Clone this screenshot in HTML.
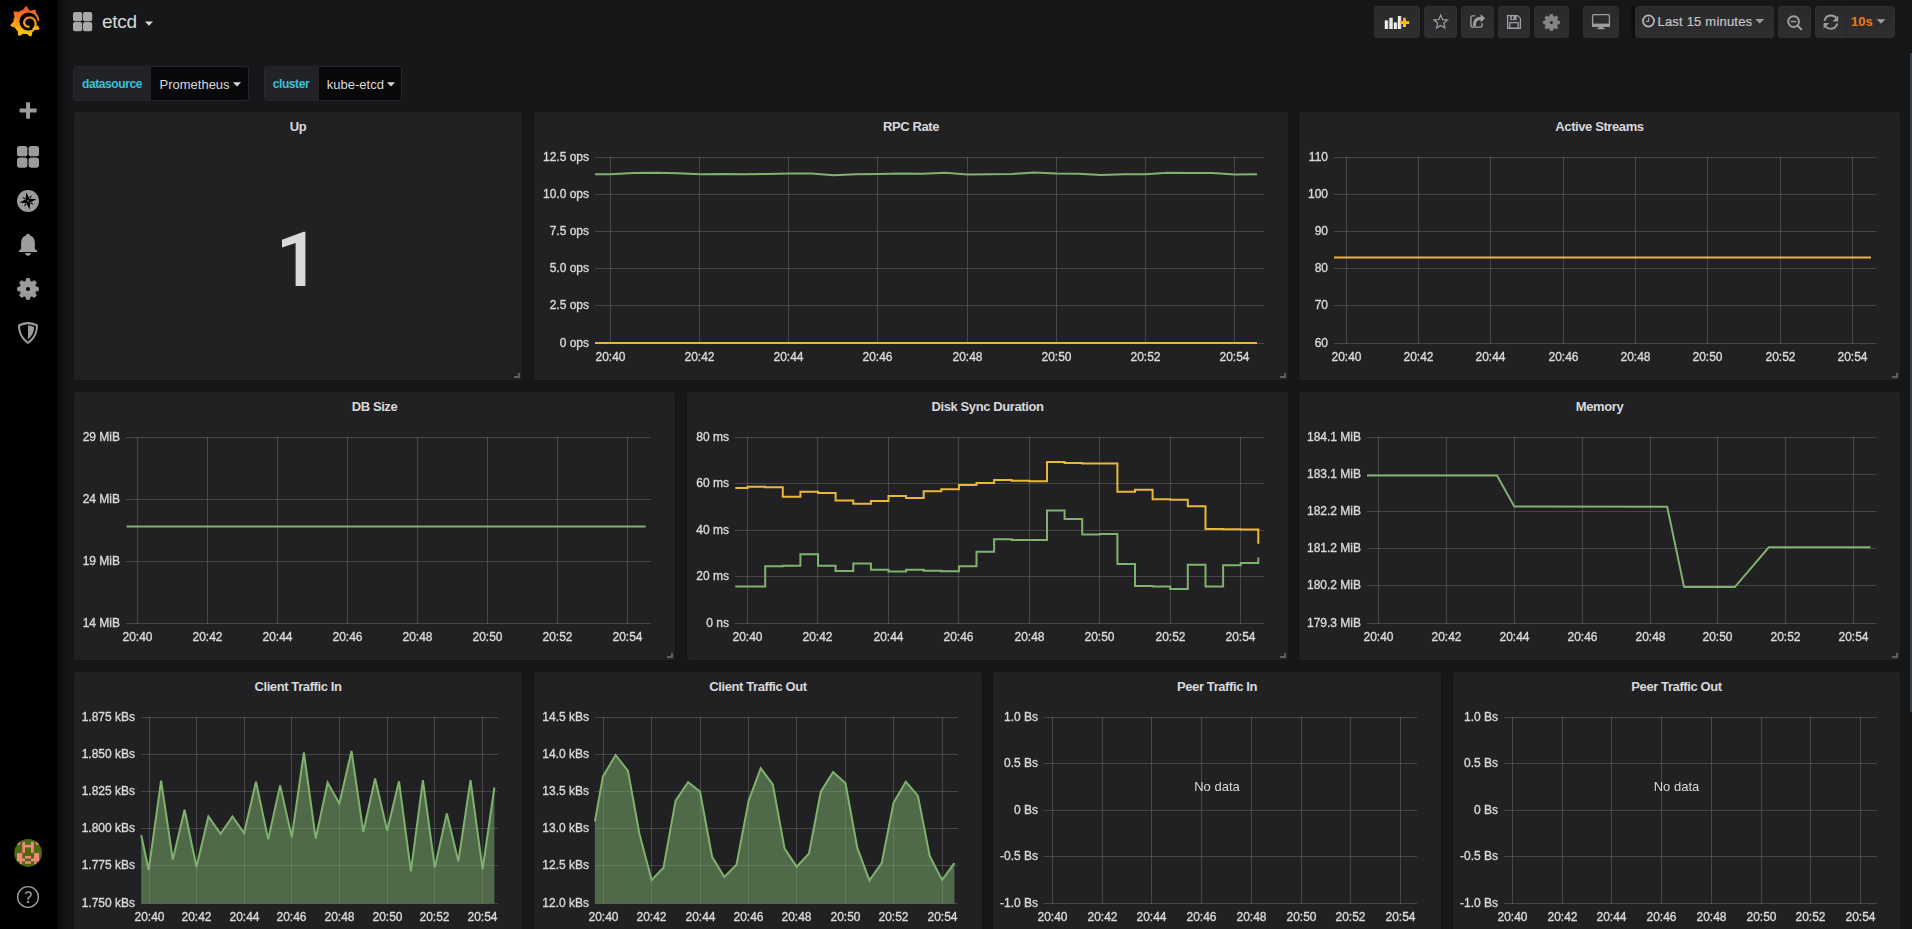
<!DOCTYPE html>
<html><head><meta charset="utf-8"><title>etcd - Grafana</title>
<style>
html,body{margin:0;padding:0;}
body{width:1912px;height:929px;overflow:hidden;background:#161719;position:relative;font-family:"Liberation Sans",sans-serif;color:#d8d9da;}
.side{position:absolute;left:0;top:0;width:57px;height:929px;background:#000;}
.sshadow{position:absolute;left:57px;top:0;width:17px;height:929px;background:linear-gradient(to right,#0b0b0c,#111214 40%,#161719);}
.panel{position:absolute;box-sizing:border-box;background:#212124;border:1px solid #141414;border-radius:3px;}
.ptitle{position:absolute;left:0;right:0;top:7px;text-align:center;font-size:13px;font-weight:bold;letter-spacing:-0.4px;color:#d8d9da;line-height:16px;}
.rh{position:absolute;right:2px;bottom:2px;width:6px;height:5px;border-right:2px solid #5f5f61;border-bottom:2px solid #5f5f61;box-sizing:border-box;}
.btn{position:absolute;top:6px;height:32px;box-sizing:border-box;border-radius:3px;background:linear-gradient(#2a2a2c,#2e2e31);border:1px solid #2f2f32;}
.tv{position:absolute;top:66px;height:35px;box-sizing:border-box;border:1px solid #26272b;border-radius:3px;background:#09090b;font-size:13px;}
.tvl{position:absolute;left:0;top:0;bottom:0;background:#212327;color:#38c2d6;font-weight:bold;}
.tvv{position:absolute;top:0;bottom:0;color:#d8d9da;}
svg text{font-family:"Liberation Sans",sans-serif;font-size:12px;fill:#d8d9da;}
.lbl text{stroke:#d8d9da;stroke-width:0.35px;}
.ov{will-change:transform;}
</style></head><body>
<div class="side"></div>
<div class="sshadow"></div>
<svg width="57" height="45" style="position:absolute;left:0;top:0"><defs><linearGradient id="lg" x1="0" y1="0" x2="0" y2="1"><stop offset="0" stop-color="#ee4a2b"/><stop offset="0.5" stop-color="#f7921e"/><stop offset="1" stop-color="#fdd00a"/></linearGradient><linearGradient id="lg2" gradientUnits="userSpaceOnUse" x1="0" y1="6" x2="0" y2="37"><stop offset="0" stop-color="#ee4a2b"/><stop offset="0.5" stop-color="#f7921e"/><stop offset="1" stop-color="#fdd00a"/></linearGradient></defs><path d="M13.40 21.80 L13.41 21.37 L13.43 20.95 L13.47 20.52 L13.52 20.10 L13.59 19.68 L13.67 19.26 L13.76 18.85 L13.87 18.44 L14.00 18.03 L14.14 17.63 L14.29 17.23 L14.45 16.84 L14.63 16.45 L14.37 15.83 L14.14 15.19 L13.95 14.52 L13.78 13.83 L13.65 13.12 L13.55 12.39 L13.50 11.64 L14.24 11.57 L14.97 11.54 L15.70 11.54 L16.40 11.59 L17.10 11.67 L17.77 11.78 L18.43 11.93 L18.78 11.69 L19.13 11.45 L19.50 11.23 L19.87 11.03 L20.25 10.83 L20.64 10.65 L21.03 10.49 L21.43 10.34 L21.83 10.20 L22.24 10.07 L22.65 9.96 L23.06 9.87 L23.39 9.28 L23.76 8.70 L24.16 8.13 L24.61 7.58 L25.08 7.04 L25.60 6.51 L26.15 6.01 L26.67 6.55 L27.14 7.11 L27.58 7.68 L27.99 8.27 L28.35 8.86 L28.68 9.46 L28.96 10.07 L29.37 10.20 L29.77 10.34 L30.17 10.49 L30.56 10.65 L30.95 10.83 L31.57 10.57 L32.21 10.34 L32.88 10.15 L33.57 9.98 L34.28 9.85 L35.01 9.75 L35.76 9.70 L35.83 10.44 L35.86 11.17 L35.86 11.90 L35.81 12.60 L36.09 12.99 L36.40 13.37 L36.68 13.75 L36.96 14.14 L37.22 14.54 L37.46 14.95 L37.70 15.37 L37.91 15.79 L38.12 16.23 L38.30 16.67 L38.47 17.11 L38.63 17.57 L38.77 18.02 L38.89 18.49 L39.00 18.95 L39.09 19.42 L39.17 19.89 L39.52 20.34 L39.27 20.84 L37.79 21.37 L37.80 21.80 L37.79 22.23 L37.77 22.65 L37.73 23.08 L37.68 23.50 L37.61 23.92 L37.53 24.34 L37.44 24.75 L37.82 25.30 L38.18 25.89 L38.51 26.50 L38.82 27.14 L39.09 27.81 L39.34 28.50 L39.55 29.22 L38.84 29.44 L38.13 29.63 L37.42 29.77 L36.72 29.88 L36.02 29.94 L35.34 29.97 L34.67 29.96 L34.38 30.27 L34.07 30.58 L33.76 30.87 L33.44 31.15 L33.11 31.41 L32.77 31.67 L32.42 31.91 L32.34 32.58 L32.21 33.26 L32.05 33.93 L31.85 34.61 L31.61 35.29 L31.33 35.97 L31.00 36.65 L30.32 36.34 L29.67 36.00 L29.05 35.63 L28.46 35.24 L27.90 34.83 L27.37 34.39 L26.88 33.93 L26.45 33.97 L26.03 33.99 L25.60 34.00 L25.17 33.99 L24.75 33.97 L24.32 33.93 L23.90 33.88 L23.48 33.81 L23.06 33.73 L22.52 34.14 L21.95 34.52 L21.35 34.87 L20.72 35.20 L20.07 35.50 L19.38 35.76 L18.67 36.00 L18.42 35.30 L18.21 34.59 L18.04 33.89 L17.92 33.19 L17.82 32.50 L17.77 31.82 L17.76 31.15 L17.44 30.87 L17.13 30.58 L16.82 30.27 L16.53 29.96 L16.25 29.64 L15.99 29.31 L15.73 28.97 L15.49 28.62 L15.25 28.27 L15.03 27.90 L14.83 27.53 L14.17 27.37 L13.52 27.18 L12.86 26.95 L12.20 26.68 L11.55 26.36 L10.91 26.01 L10.27 25.62 L10.65 24.98 L11.05 24.37 L11.48 23.78 L11.93 23.24 L12.40 22.72 L12.89 22.24 Z" fill="url(#lg)"/><circle cx="28.5" cy="21.5" r="9.1" fill="#000"/><path d="M35 20.9 L41.5 20.5 L41.5 25.7 L35 25.5 Z" fill="#000"/><path d="M29.52 26.50 L29.02 26.64 L28.48 26.70 L27.91 26.68 L27.34 26.57 L26.76 26.37 L26.21 26.08 L25.68 25.70 L25.20 25.23 L24.79 24.68 L24.45 24.05 L24.19 23.36 L24.10 22.63 L24.19 21.89 L24.38 21.17 L24.67 20.48 L25.05 19.84 L25.52 19.25 L26.07 18.73 L26.68 18.29 L27.36 17.95 L28.08 17.69 L28.83 17.54 L29.59 17.49 L30.37 17.52 L31.14 17.66 L31.89 17.90 L32.60 18.25 L33.27 18.70 L33.87 19.25 L34.39 19.88 L34.83 20.58 L35.16 21.35 L35.39 22.16 L35.50 23.00 L35.60 23.87 L35.57 24.77 L35.41 25.68 L35.12 26.57 L34.69 27.44 L34.12 28.25 L33.44 28.99 L32.64 29.63" fill="none" stroke="url(#lg2)" stroke-width="2.2" stroke-linejoin="round"/></svg><svg width="57" height="929" style="position:absolute;left:0;top:0"><rect x="26.1" y="102.3" width="3.9" height="16.4" rx="0.6" fill="#9b9b9c"/><rect x="19.6" y="108.6" width="17" height="3.9" rx="0.6" fill="#9b9b9c"/><rect x="17" y="146" width="10.4" height="10.3" rx="2.6" fill="#9b9b9c"/><rect x="28.6" y="146" width="10.4" height="10.3" rx="2.6" fill="#9b9b9c"/><rect x="17" y="157.4" width="10.4" height="10.3" rx="2.6" fill="#9b9b9c"/><rect x="28.6" y="157.4" width="10.4" height="10.3" rx="2.6" fill="#9b9b9c"/><circle cx="28" cy="201" r="11" fill="#9b9b9c"/><path d="M26.31 192.51 L29.52 198.63 L36.39 199.31 L30.27 202.52 L29.59 209.39 L26.38 203.27 L19.51 202.59 L25.63 199.38 Z M30.82 198.30 L29.33 197.30 L31.81 195.23 Z M30.60 203.82 L31.60 202.33 L33.67 204.81 Z M25.08 203.60 L26.57 204.60 L24.09 206.67 Z M25.30 198.08 L24.30 199.57 L22.23 197.09 Z " fill="#000"/><rect x="27.3" y="200.3" width="1.3" height="1.3" fill="#9b9b9c"/><path d="M28 233.8 C28.9 233.8 29.7 234.6 30.2 235.6 C33 236.6 34.8 239 34.9 242.5 L34.9 248.6 C34.9 249.2 35.6 249.9 36.4 250 C37 250.1 37.2 250.6 37.2 251.2 C37.2 251.9 36.8 252.1 36.2 252.1 L19.8 252.1 C19.2 252.1 18.8 251.9 18.8 251.2 C18.8 250.6 19 250.1 19.6 250 C20.4 249.9 21.1 249.2 21.1 248.6 L21.1 242.5 C21.2 239 23 236.6 25.8 235.6 C26.3 234.6 27.1 233.8 28 233.8 Z" fill="#9b9b9c"/><path d="M25 252.9 L31 252.9 C30.6 254.8 29.5 255.8 28 255.8 C26.5 255.8 25.4 254.8 25 252.9 Z" fill="#9b9b9c"/><path d="M25.86 281.29 L26.38 278.52 L29.62 278.52 L30.14 281.29 L31.94 282.04 L34.26 280.45 L36.55 282.74 L34.96 285.06 L35.71 286.86 L38.48 287.38 L38.48 290.62 L35.71 291.14 L34.96 292.94 L36.55 295.26 L34.26 297.55 L31.94 295.96 L30.14 296.71 L29.62 299.48 L26.38 299.48 L25.86 296.71 L24.06 295.96 L21.74 297.55 L19.45 295.26 L21.04 292.94 L20.29 291.14 L17.52 290.62 L17.52 287.38 L20.29 286.86 L21.04 285.06 L19.45 282.74 L21.74 280.45 L24.06 282.04 Z" fill="#9b9b9c" stroke="#9b9b9c" stroke-width="0.8" stroke-linejoin="round"/><circle cx="28.0" cy="289.0" r="2.0" fill="#000"/><path d="M28 322 C31.5 322 35.2 323.4 38 324.8 C38 333 35 339.5 28 344 C21 339.5 18 333 18 324.8 C20.8 323.4 24.5 322 28 322 Z" fill="#9b9b9c"/><path d="M28 324.3 C31 324.3 33.9 325.3 35.9 326.3 C35.8 332.6 33.4 337.7 28 341.4 C22.6 337.7 20.2 332.6 20.1 326.3 C22.1 325.3 25 324.3 28 324.3 Z" fill="#000"/><path d="M28 325.6 C30.5 325.6 32.5 326.3 34.2 327.1 C34 332.2 32 336.4 28 339.4 Z" fill="#9b9b9c"/><defs><clipPath id="avc"><circle cx="28.1" cy="853" r="13.9"/></clipPath></defs><g clip-path="url(#avc)"><rect x="14" y="839" width="28.2" height="28.2" fill="#4d6a12"/><g fill="#f2877c"><rect x="16.8" y="841.5" width="3.1" height="3.3"/><rect x="36" y="841.5" width="3.1" height="3.3"/><rect x="22.3" y="841.9" width="2.7" height="10.9"/><rect x="31" y="841.9" width="2.8" height="10.9"/><rect x="25" y="844.8" width="6" height="2.6"/><rect x="17" y="853" width="5.3" height="8.3"/><rect x="22.3" y="858.5" width="2.7" height="2.8"/><rect x="19.7" y="861.3" width="2.6" height="2.5"/><rect x="34" y="853" width="5.1" height="8.3"/><rect x="31" y="858.5" width="3" height="2.8"/><rect x="34" y="861.3" width="2.4" height="2.5"/><rect x="25" y="856" width="6" height="2.5"/><rect x="25" y="861.3" width="6" height="2.5"/></g></g><circle cx="28" cy="897" r="10.4" fill="none" stroke="#9b9b9c" stroke-width="1.4"/><path d="M25.3 893.9 C25.8 892.4 26.8 891.8 28.1 891.8 C29.9 891.8 31.1 893 31.1 894.5 C31.1 896.1 29.9 896.8 28.9 897.5 C28.3 897.9 28.1 898.4 28.1 899.3 L28.1 899.8" fill="none" stroke="#9b9b9c" stroke-width="1.6"/><rect x="27.0" y="900.9" width="2.1" height="2.0" fill="#9b9b9c"/></svg><svg width="20" height="20" style="position:absolute;left:73px;top:12px"><rect x="0" y="0" width="9.2" height="9.2" rx="2" fill="#a9a9aa"/><rect x="10" y="0" width="9.2" height="9.2" rx="2" fill="#a9a9aa"/><rect x="0" y="10" width="9.2" height="9.2" rx="2" fill="#a9a9aa"/><rect x="10" y="10" width="9.2" height="9.2" rx="2" fill="#a9a9aa"/></svg><div style="position:absolute;left:102px;top:10px;font-size:19px;letter-spacing:-0.25px;line-height:24px;color:#d8d9da">etcd</div><svg width="10" height="6" style="position:absolute;left:145px;top:21px"><path d="M0 0.5 L8 0.5 L4 4.8 Z" fill="#d8d9da"/></svg><div class="btn" style="left:1374px;width:46px"></div><div class="btn" style="left:1424px;width:33px"></div><div class="btn" style="left:1461px;width:33px"></div><div class="btn" style="left:1498px;width:32px"></div><div class="btn" style="left:1534px;width:35px"></div><div class="btn" style="left:1583px;width:36px"></div><div class="btn" style="left:1635px;width:139px"></div><div class="btn" style="left:1778px;width:33px"></div><div class="btn" style="left:1815px;width:80px"></div><div style="position:absolute;left:1631px;top:6px;width:4px;height:32px;background:linear-gradient(to right,rgba(10,10,11,0.3),#0a0a0b)"></div><div style="position:absolute;left:1846px;top:7px;width:1px;height:30px;background:#262629"></div><svg width="1912" height="45" style="position:absolute;left:0;top:0"><defs><linearGradient id="bar" x1="0" y1="0" x2="1" y2="0"><stop offset="0" stop-color="#fff"/><stop offset="0.5" stop-color="#e8e8e8"/><stop offset="1" stop-color="#cfcfcf"/></linearGradient><linearGradient id="plus" x1="0" y1="0" x2="0" y2="1"><stop offset="0" stop-color="#f7a223"/><stop offset="1" stop-color="#ffcf0c"/></linearGradient></defs><rect x="1384.8" y="20.4" width="3.4" height="8.6" fill="url(#bar)"/><rect x="1389.4" y="17.8" width="3.4" height="11.2" fill="url(#bar)"/><rect x="1393.8" y="22.4" width="3.4" height="6.6" fill="url(#bar)"/><rect x="1397.9" y="16" width="3.4" height="13.0" fill="url(#bar)"/><rect x="1399.9" y="21" width="9.2" height="3" fill="url(#plus)"/><rect x="1403" y="17.8" width="3" height="9.2" fill="url(#plus)"/><path d="M1440.70 15.10 L1442.58 19.61 L1447.45 20.01 L1443.74 23.19 L1444.87 27.94 L1440.70 25.40 L1436.53 27.94 L1437.66 23.19 L1433.95 20.01 L1438.82 19.61 Z" fill="none" stroke="#9d9ea0" stroke-width="1.2" stroke-linejoin="miter"/><path d="M1475.3 15.9 L1472.4 15.9 Q1470.9 15.9 1470.9 17.4 L1470.9 25.6 Q1470.9 27.1 1472.4 27.1 L1480.5 27.1 Q1482 27.1 1482 25.6 L1482 23.2" fill="none" stroke="#9d9ea0" stroke-width="1.4"/><path d="M1474.3 26.3 C1474.3 21 1475.6 18.4 1481 18.4" fill="none" stroke="#9d9ea0" stroke-width="3.1"/><path d="M1480.6 13.9 L1485.1 18.3 L1480.6 22.6 Z" fill="#9d9ea0"/><path d="M1507.6 15.6 L1517.6 15.6 L1520.4 18.4 L1520.4 28.4 L1507.6 28.4 Z" fill="none" stroke="#9d9ea0" stroke-width="1.3"/><rect x="1510.2" y="15.6" width="6.4" height="4.6" fill="#9d9ea0"/><rect x="1511.8" y="16.3" width="1.6" height="3" fill="#2c2c2f"/><rect x="1509.8" y="22.6" width="8.4" height="5.6" fill="none" stroke="#9d9ea0" stroke-width="1.3"/><path d="M1549.74 16.53 L1550.15 14.40 L1552.65 14.40 L1553.06 16.53 L1554.45 17.10 L1556.24 15.88 L1558.02 17.66 L1556.80 19.45 L1557.37 20.84 L1559.50 21.25 L1559.50 23.75 L1557.37 24.16 L1556.80 25.55 L1558.02 27.34 L1556.24 29.12 L1554.45 27.90 L1553.06 28.47 L1552.65 30.60 L1550.15 30.60 L1549.74 28.47 L1548.35 27.90 L1546.56 29.12 L1544.78 27.34 L1546.00 25.55 L1545.43 24.16 L1543.30 23.75 L1543.30 21.25 L1545.43 20.84 L1546.00 19.45 L1544.78 17.66 L1546.56 15.88 L1548.35 17.10 Z" fill="#858587" stroke="#858587" stroke-width="0.8" stroke-linejoin="round"/><circle cx="1551.4" cy="22.5" r="1.6" fill="#2c2c2f"/><rect x="1592.6" y="14.6" width="16.8" height="11.6" rx="1.2" fill="none" stroke="#9d9ea0" stroke-width="1.3"/><rect x="1592" y="23.6" width="18" height="3.2" fill="#9d9ea0"/><rect x="1599" y="26.6" width="4" height="1.6" fill="#9d9ea0"/><rect x="1597.4" y="27.8" width="7.2" height="1.4" fill="#9d9ea0"/><circle cx="1648.5" cy="21" r="5.6" fill="none" stroke="#b4b5b7" stroke-width="1.7"/><path d="M1648.6 17.6 L1648.6 21.4 L1645.8 21.4" fill="none" stroke="#9d9ea0" stroke-width="1.2"/><path d="M1755.2 19 L1764.2 19 L1759.7 23.6 Z" fill="#9d9ea0"/><circle cx="1793.6" cy="21.6" r="5.4" fill="none" stroke="#9d9ea0" stroke-width="1.9"/><path d="M1797.4 25.6 L1801.2 29.2" stroke="#9d9ea0" stroke-width="2.1" stroke-linecap="round"/><rect x="1790.8" y="20.8" width="5.6" height="1.5" fill="#9d9ea0"/><path d="M1824.6 20.8 C1825.4 17.4 1828 15.6 1831 15.6 C1833.4 15.6 1835 16.6 1836.2 17.8" fill="none" stroke="#9d9ea0" stroke-width="2"/><path d="M1838.2 15.6 L1838.2 21.4 L1832.6 21.4 Z" fill="#9d9ea0"/><path d="M1837.2 23.6 C1836.4 27 1833.8 28.8 1830.8 28.8 C1828.4 28.8 1826.8 27.8 1825.6 26.6" fill="none" stroke="#9d9ea0" stroke-width="2"/><path d="M1823.6 28.8 L1823.6 23 L1829.2 23 Z" fill="#9d9ea0"/><path d="M1876.6 19.2 L1885.5 19.2 L1881 23.8 Z" fill="#9d9ea0"/></svg><div style="position:absolute;left:1657.5px;top:14px;font-size:13px;line-height:16px;letter-spacing:0.2px;color:#c4c5c7;-webkit-text-stroke:0.2px #c4c5c7">Last 15 minutes</div><div style="position:absolute;left:1851px;top:14px;font-size:13px;line-height:16px;font-weight:bold;color:#eb7b18">10s</div><div class="tv" style="left:73px;width:176px"><div class="tvl" style="width:77px"></div></div><div class="tv" style="left:264px;width:138px"><div class="tvl" style="width:54px"></div></div><div style="position:absolute;left:82px;top:76px;font-size:12px;line-height:16px;font-weight:bold;letter-spacing:-0.4px;color:#38c2d6">datasource</div><div style="position:absolute;left:159.5px;top:77px;font-size:13px;line-height:16px;color:#d8d9da">Prometheus</div><svg width="10" height="6" style="position:absolute;left:233px;top:82px"><path d="M0 0.3 L8 0.3 L4 4.5 Z" fill="#d8d9da"/></svg><div style="position:absolute;left:272.7px;top:76px;font-size:12px;line-height:16px;font-weight:bold;letter-spacing:-0.4px;color:#38c2d6">cluster</div><div style="position:absolute;left:326.8px;top:77px;font-size:13px;line-height:16px;color:#d8d9da">kube-etcd</div><svg width="10" height="6" style="position:absolute;left:386.8px;top:82px"><path d="M0 0.3 L8 0.3 L4 4.5 Z" fill="#d8d9da"/></svg>
<div class="panel" style="left:73px;top:111px;width:450px;height:270px"><div class="ptitle">Up</div><div class="rh"></div></div><div class="panel" style="left:533px;top:111px;width:756px;height:270px"><div class="ptitle">RPC Rate</div><div class="rh"></div></div><div class="panel" style="left:1298px;top:111px;width:603px;height:270px"><div class="ptitle">Active Streams</div><div class="rh"></div></div><div class="panel" style="left:73px;top:391px;width:603px;height:270px"><div class="ptitle">DB Size</div><div class="rh"></div></div><div class="panel" style="left:686px;top:391px;width:603px;height:270px"><div class="ptitle">Disk Sync Duration</div><div class="rh"></div></div><div class="panel" style="left:1298px;top:391px;width:603px;height:270px"><div class="ptitle">Memory</div><div class="rh"></div></div><div class="panel" style="left:73px;top:671px;width:450px;height:272px"><div class="ptitle">Client Traffic In</div></div><div class="panel" style="left:533px;top:671px;width:450px;height:272px"><div class="ptitle">Client Traffic Out</div></div><div class="panel" style="left:992px;top:671px;width:450px;height:272px"><div class="ptitle">Peer Traffic In</div></div><div class="panel" style="left:1452px;top:671px;width:449px;height:272px"><div class="ptitle">Peer Traffic Out</div></div>
<svg class="ov" width="1912" height="929" style="position:absolute;left:0;top:0">
<g stroke="rgba(200,200,200,0.22)" stroke-width="1" fill="none"><path d="M595 157.5 H1264"/><path d="M595 194.5 H1264"/><path d="M595 231.5 H1264"/><path d="M595 268.5 H1264"/><path d="M595 305.5 H1264"/><path d="M595 343.5 H1264"/><path d="M610.5 157 V344"/><path d="M699.5 157 V344"/><path d="M788.5 157 V344"/><path d="M877.5 157 V344"/><path d="M967.5 157 V344"/><path d="M1056.5 157 V344"/><path d="M1145.5 157 V344"/><path d="M1234.5 157 V344"/><path d="M1334 157.5 H1876"/><path d="M1334 194.5 H1876"/><path d="M1334 231.5 H1876"/><path d="M1334 268.5 H1876"/><path d="M1334 305.5 H1876"/><path d="M1334 343.5 H1876"/><path d="M1346.5 157 V344"/><path d="M1418.5 157 V344"/><path d="M1490.5 157 V344"/><path d="M1563.5 157 V344"/><path d="M1635.5 157 V344"/><path d="M1707.5 157 V344"/><path d="M1780.5 157 V344"/><path d="M1852.5 157 V344"/><path d="M126 437.5 H651"/><path d="M126 499.5 H651"/><path d="M126 561.5 H651"/><path d="M126 623.5 H651"/><path d="M137.5 437 V624"/><path d="M207.5 437 V624"/><path d="M277.5 437 V624"/><path d="M347.5 437 V624"/><path d="M417.5 437 V624"/><path d="M487.5 437 V624"/><path d="M557.5 437 V624"/><path d="M627.5 437 V624"/><path d="M735 437.5 H1264"/><path d="M735 483.5 H1264"/><path d="M735 530.5 H1264"/><path d="M735 576.5 H1264"/><path d="M735 623.5 H1264"/><path d="M747.5 437 V624"/><path d="M817.5 437 V624"/><path d="M888.5 437 V624"/><path d="M958.5 437 V624"/><path d="M1029.5 437 V624"/><path d="M1099.5 437 V624"/><path d="M1170.5 437 V624"/><path d="M1240.5 437 V624"/><path d="M1367 437.5 H1876"/><path d="M1367 474.5 H1876"/><path d="M1367 511.5 H1876"/><path d="M1367 548.5 H1876"/><path d="M1367 585.5 H1876"/><path d="M1367 623.5 H1876"/><path d="M1378.5 437 V624"/><path d="M1446.5 437 V624"/><path d="M1514.5 437 V624"/><path d="M1582.5 437 V624"/><path d="M1650.5 437 V624"/><path d="M1717.5 437 V624"/><path d="M1785.5 437 V624"/><path d="M1853.5 437 V624"/><path d="M141 717.5 H498"/><path d="M141 754.5 H498"/><path d="M141 791.5 H498"/><path d="M141 828.5 H498"/><path d="M141 865.5 H498"/><path d="M141 903.5 H498"/><path d="M149.5 717 V904"/><path d="M196.5 717 V904"/><path d="M244.5 717 V904"/><path d="M291.5 717 V904"/><path d="M339.5 717 V904"/><path d="M387.5 717 V904"/><path d="M434.5 717 V904"/><path d="M482.5 717 V904"/><path d="M595 717.5 H958"/><path d="M595 754.5 H958"/><path d="M595 791.5 H958"/><path d="M595 828.5 H958"/><path d="M595 865.5 H958"/><path d="M595 903.5 H958"/><path d="M603.5 717 V904"/><path d="M651.5 717 V904"/><path d="M700.5 717 V904"/><path d="M748.5 717 V904"/><path d="M796.5 717 V904"/><path d="M845.5 717 V904"/><path d="M893.5 717 V904"/><path d="M942.5 717 V904"/><path d="M1044 717.5 H1417"/><path d="M1044 763.5 H1417"/><path d="M1044 810.5 H1417"/><path d="M1044 856.5 H1417"/><path d="M1044 903.5 H1417"/><path d="M1052.5 717 V904"/><path d="M1102.5 717 V904"/><path d="M1151.5 717 V904"/><path d="M1201.5 717 V904"/><path d="M1251.5 717 V904"/><path d="M1301.5 717 V904"/><path d="M1350.5 717 V904"/><path d="M1400.5 717 V904"/><path d="M1504 717.5 H1877"/><path d="M1504 763.5 H1877"/><path d="M1504 810.5 H1877"/><path d="M1504 856.5 H1877"/><path d="M1504 903.5 H1877"/><path d="M1512.5 717 V904"/><path d="M1562.5 717 V904"/><path d="M1611.5 717 V904"/><path d="M1661.5 717 V904"/><path d="M1711.5 717 V904"/><path d="M1761.5 717 V904"/><path d="M1810.5 717 V904"/><path d="M1860.5 717 V904"/></g>
<g><path d="M595 174.2 L610.9 174.2 L633.2 173.1 L655.5 172.8 L677.7 173.2 L700 174.2 L722.3 173.9 L744.6 174.2 L766.9 173.9 L789.1 173.5 L811.4 173.6 L833.7 175.2 L856 174.3 L878.3 174 L900.5 173.5 L922.8 173.8 L945.1 172.8 L967.4 174.6 L989.7 174.2 L1011.9 174 L1034.2 172.4 L1056.5 173.5 L1078.8 173.8 L1101.1 174.9 L1123.3 174.2 L1145.6 174.2 L1167.9 172.8 L1190.2 172.9 L1212.5 172.9 L1234.7 174.6 L1257 174.2" fill="none" stroke="#7eb26d" stroke-width="2" stroke-linejoin="miter"/><path d="M595 343 L1257 343" fill="none" stroke="#eab839" stroke-width="2" stroke-linejoin="miter"/><path d="M1334 257.5 L1871 257.5" fill="none" stroke="#eab839" stroke-width="2" stroke-linejoin="miter"/><path d="M126.5 526.5 L645.7 526.5" fill="none" stroke="#7eb26d" stroke-width="2" stroke-linejoin="miter"/><path d="M735.3 586.6 L747.6 586.6 L747.6 586.6 L765.2 586.6 L765.2 566.3 L782.8 566.3 L782.8 565.8 L800.4 565.8 L800.4 554.2 L818 554.2 L818 565.8 L835.6 565.8 L835.6 571 L853.3 571 L853.3 563.6 L870.9 563.6 L870.9 569.8 L888.5 569.8 L888.5 571.5 L906.1 571.5 L906.1 569.8 L923.7 569.8 L923.7 570.7 L941.3 570.7 L941.3 571.2 L958.9 571.2 L958.9 566.3 L976.5 566.3 L976.5 551.7 L994.1 551.7 L994.1 539.3 L1011.8 539.3 L1011.8 540 L1029.4 540 L1029.4 540 L1047 540 L1047 510.4 L1064.6 510.4 L1064.6 519 L1082.2 519 L1082.2 534.4 L1099.8 534.4 L1099.8 533.9 L1117.4 533.9 L1117.4 564.1 L1135 564.1 L1135 586.1 L1152.6 586.1 L1152.6 586.6 L1170.2 586.6 L1170.2 588.9 L1187.8 588.9 L1187.8 564.8 L1205.5 564.8 L1205.5 586.4 L1223.1 586.4 L1223.1 565.3 L1240.7 565.3 L1240.7 563.1 L1258.3 563.1 L1258.3 557.4" fill="none" stroke="#7eb26d" stroke-width="2" stroke-linejoin="miter"/><path d="M735.3 488 L747.6 488 L747.6 486.8 L765.2 486.8 L765.2 487.3 L782.8 487.3 L782.8 496.7 L800.4 496.7 L800.4 491.8 L818 491.8 L818 493 L835.6 493 L835.6 500.4 L853.3 500.4 L853.3 503.7 L870.9 503.7 L870.9 501 L888.5 501 L888.5 496 L906.1 496 L906.1 498 L923.7 498 L923.7 491.3 L941.3 491.3 L941.3 489.3 L958.9 489.3 L958.9 484.9 L976.5 484.9 L976.5 483.1 L994.1 483.1 L994.1 479.9 L1011.8 479.9 L1011.8 480.7 L1029.4 480.7 L1029.4 481.2 L1047 481.2 L1047 462.1 L1064.6 462.1 L1064.6 463.1 L1082.2 463.1 L1082.2 463.6 L1099.8 463.6 L1099.8 463.6 L1117.4 463.6 L1117.4 491.8 L1135 491.8 L1135 489.8 L1152.6 489.8 L1152.6 499.2 L1170.2 499.2 L1170.2 499.7 L1187.8 499.7 L1187.8 506.2 L1205.5 506.2 L1205.5 528.9 L1223.1 528.9 L1223.1 529.2 L1240.7 529.2 L1240.7 529.5 L1258.3 529.5 L1258.3 543.8" fill="none" stroke="#eab839" stroke-width="2" stroke-linejoin="miter"/><path d="M1367 475.4 L1497 475.4 L1514.3 506.6 L1667.2 506.7 L1684.1 587.1 L1734.8 587.1 L1768.8 547.3 L1870.5 547.3" fill="none" stroke="#7eb26d" stroke-width="2" stroke-linejoin="miter"/><path d="M141.2 903.5 L141.2 835.2 L148.7 869.8 L161.1 780.7 L172.8 859.5 L184.6 809.8 L196.5 867 L208.4 816.4 L220.6 833.8 L232.5 816.4 L244.1 833 L256 781.8 L268.2 839.4 L280.1 785.4 L291.8 837.3 L303.9 752.5 L315.7 838.7 L327.6 782.6 L339.4 803.5 L351.5 751 L363.3 831.8 L375.1 778.4 L387.2 830.6 L399 781.3 L410.9 871.3 L422.9 780.1 L434.8 867.6 L446.8 813.4 L458.4 861.4 L470.5 780.1 L482.6 869.3 L494.4 787.5 L494.4 903.5 Z" fill="#7eb26d" fill-opacity="0.5" stroke="none"/><path d="M594.9 903.5 L594.9 821.4 L602.9 776.6 L615.6 755 L628 770.8 L639.4 833.8 L651.6 880 L663.5 867.6 L675.6 800.6 L688.1 782.1 L700 791.5 L712.1 856.8 L724.3 877 L736.5 864.8 L748.7 800.6 L760.7 768.3 L772.8 784.5 L784.6 848.6 L796.7 866.8 L809 853.5 L820.8 791.7 L833.1 772 L845.5 783.3 L857.3 847.9 L869.4 880.4 L881.7 863.1 L893.5 802.8 L905.8 781.8 L917.9 795.6 L929.7 856 L942.1 879.9 L954.4 863.1 L954.4 903.5 Z" fill="#7eb26d" fill-opacity="0.5" stroke="none"/><path d="M141.2 835.2 L148.7 869.8 L161.1 780.7 L172.8 859.5 L184.6 809.8 L196.5 867 L208.4 816.4 L220.6 833.8 L232.5 816.4 L244.1 833 L256 781.8 L268.2 839.4 L280.1 785.4 L291.8 837.3 L303.9 752.5 L315.7 838.7 L327.6 782.6 L339.4 803.5 L351.5 751 L363.3 831.8 L375.1 778.4 L387.2 830.6 L399 781.3 L410.9 871.3 L422.9 780.1 L434.8 867.6 L446.8 813.4 L458.4 861.4 L470.5 780.1 L482.6 869.3 L494.4 787.5" fill="none" stroke="#7eb26d" stroke-width="2" stroke-linejoin="miter"/><path d="M594.9 821.4 L602.9 776.6 L615.6 755 L628 770.8 L639.4 833.8 L651.6 880 L663.5 867.6 L675.6 800.6 L688.1 782.1 L700 791.5 L712.1 856.8 L724.3 877 L736.5 864.8 L748.7 800.6 L760.7 768.3 L772.8 784.5 L784.6 848.6 L796.7 866.8 L809 853.5 L820.8 791.7 L833.1 772 L845.5 783.3 L857.3 847.9 L869.4 880.4 L881.7 863.1 L893.5 802.8 L905.8 781.8 L917.9 795.6 L929.7 856 L942.1 879.9 L954.4 863.1" fill="none" stroke="#7eb26d" stroke-width="2" stroke-linejoin="miter"/></g>
<g class="lbl"><text x="589" y="161" text-anchor="end">12.5 ops</text><text x="589" y="198" text-anchor="end">10.0 ops</text><text x="589" y="235" text-anchor="end">7.5 ops</text><text x="589" y="272" text-anchor="end">5.0 ops</text><text x="589" y="309" text-anchor="end">2.5 ops</text><text x="589" y="347" text-anchor="end">0 ops</text><text x="610.5" y="361" text-anchor="middle">20:40</text><text x="699.5" y="361" text-anchor="middle">20:42</text><text x="788.5" y="361" text-anchor="middle">20:44</text><text x="877.5" y="361" text-anchor="middle">20:46</text><text x="967.5" y="361" text-anchor="middle">20:48</text><text x="1056.5" y="361" text-anchor="middle">20:50</text><text x="1145.5" y="361" text-anchor="middle">20:52</text><text x="1234.5" y="361" text-anchor="middle">20:54</text><text x="1328" y="161" text-anchor="end">110</text><text x="1328" y="198" text-anchor="end">100</text><text x="1328" y="235" text-anchor="end">90</text><text x="1328" y="272" text-anchor="end">80</text><text x="1328" y="309" text-anchor="end">70</text><text x="1328" y="347" text-anchor="end">60</text><text x="1346.5" y="361" text-anchor="middle">20:40</text><text x="1418.5" y="361" text-anchor="middle">20:42</text><text x="1490.5" y="361" text-anchor="middle">20:44</text><text x="1563.5" y="361" text-anchor="middle">20:46</text><text x="1635.5" y="361" text-anchor="middle">20:48</text><text x="1707.5" y="361" text-anchor="middle">20:50</text><text x="1780.5" y="361" text-anchor="middle">20:52</text><text x="1852.5" y="361" text-anchor="middle">20:54</text><text x="120" y="441" text-anchor="end">29 MiB</text><text x="120" y="503" text-anchor="end">24 MiB</text><text x="120" y="565" text-anchor="end">19 MiB</text><text x="120" y="627" text-anchor="end">14 MiB</text><text x="137.5" y="641" text-anchor="middle">20:40</text><text x="207.5" y="641" text-anchor="middle">20:42</text><text x="277.5" y="641" text-anchor="middle">20:44</text><text x="347.5" y="641" text-anchor="middle">20:46</text><text x="417.5" y="641" text-anchor="middle">20:48</text><text x="487.5" y="641" text-anchor="middle">20:50</text><text x="557.5" y="641" text-anchor="middle">20:52</text><text x="627.5" y="641" text-anchor="middle">20:54</text><text x="729" y="441" text-anchor="end">80 ms</text><text x="729" y="487" text-anchor="end">60 ms</text><text x="729" y="534" text-anchor="end">40 ms</text><text x="729" y="580" text-anchor="end">20 ms</text><text x="729" y="627" text-anchor="end">0 ns</text><text x="747.5" y="641" text-anchor="middle">20:40</text><text x="817.5" y="641" text-anchor="middle">20:42</text><text x="888.5" y="641" text-anchor="middle">20:44</text><text x="958.5" y="641" text-anchor="middle">20:46</text><text x="1029.5" y="641" text-anchor="middle">20:48</text><text x="1099.5" y="641" text-anchor="middle">20:50</text><text x="1170.5" y="641" text-anchor="middle">20:52</text><text x="1240.5" y="641" text-anchor="middle">20:54</text><text x="1361" y="441" text-anchor="end">184.1 MiB</text><text x="1361" y="478" text-anchor="end">183.1 MiB</text><text x="1361" y="515" text-anchor="end">182.2 MiB</text><text x="1361" y="552" text-anchor="end">181.2 MiB</text><text x="1361" y="589" text-anchor="end">180.2 MiB</text><text x="1361" y="627" text-anchor="end">179.3 MiB</text><text x="1378.5" y="641" text-anchor="middle">20:40</text><text x="1446.5" y="641" text-anchor="middle">20:42</text><text x="1514.5" y="641" text-anchor="middle">20:44</text><text x="1582.5" y="641" text-anchor="middle">20:46</text><text x="1650.5" y="641" text-anchor="middle">20:48</text><text x="1717.5" y="641" text-anchor="middle">20:50</text><text x="1785.5" y="641" text-anchor="middle">20:52</text><text x="1853.5" y="641" text-anchor="middle">20:54</text><text x="135" y="721" text-anchor="end">1.875 kBs</text><text x="135" y="758" text-anchor="end">1.850 kBs</text><text x="135" y="795" text-anchor="end">1.825 kBs</text><text x="135" y="832" text-anchor="end">1.800 kBs</text><text x="135" y="869" text-anchor="end">1.775 kBs</text><text x="135" y="907" text-anchor="end">1.750 kBs</text><text x="149.5" y="921" text-anchor="middle">20:40</text><text x="196.5" y="921" text-anchor="middle">20:42</text><text x="244.5" y="921" text-anchor="middle">20:44</text><text x="291.5" y="921" text-anchor="middle">20:46</text><text x="339.5" y="921" text-anchor="middle">20:48</text><text x="387.5" y="921" text-anchor="middle">20:50</text><text x="434.5" y="921" text-anchor="middle">20:52</text><text x="482.5" y="921" text-anchor="middle">20:54</text><text x="589" y="721" text-anchor="end">14.5 kBs</text><text x="589" y="758" text-anchor="end">14.0 kBs</text><text x="589" y="795" text-anchor="end">13.5 kBs</text><text x="589" y="832" text-anchor="end">13.0 kBs</text><text x="589" y="869" text-anchor="end">12.5 kBs</text><text x="589" y="907" text-anchor="end">12.0 kBs</text><text x="603.5" y="921" text-anchor="middle">20:40</text><text x="651.5" y="921" text-anchor="middle">20:42</text><text x="700.5" y="921" text-anchor="middle">20:44</text><text x="748.5" y="921" text-anchor="middle">20:46</text><text x="796.5" y="921" text-anchor="middle">20:48</text><text x="845.5" y="921" text-anchor="middle">20:50</text><text x="893.5" y="921" text-anchor="middle">20:52</text><text x="942.5" y="921" text-anchor="middle">20:54</text><text x="1038" y="721" text-anchor="end">1.0 Bs</text><text x="1038" y="767" text-anchor="end">0.5 Bs</text><text x="1038" y="814" text-anchor="end">0 Bs</text><text x="1038" y="860" text-anchor="end">-0.5 Bs</text><text x="1038" y="907" text-anchor="end">-1.0 Bs</text><text x="1052.5" y="921" text-anchor="middle">20:40</text><text x="1102.5" y="921" text-anchor="middle">20:42</text><text x="1151.5" y="921" text-anchor="middle">20:44</text><text x="1201.5" y="921" text-anchor="middle">20:46</text><text x="1251.5" y="921" text-anchor="middle">20:48</text><text x="1301.5" y="921" text-anchor="middle">20:50</text><text x="1350.5" y="921" text-anchor="middle">20:52</text><text x="1400.5" y="921" text-anchor="middle">20:54</text><text x="1498" y="721" text-anchor="end">1.0 Bs</text><text x="1498" y="767" text-anchor="end">0.5 Bs</text><text x="1498" y="814" text-anchor="end">0 Bs</text><text x="1498" y="860" text-anchor="end">-0.5 Bs</text><text x="1498" y="907" text-anchor="end">-1.0 Bs</text><text x="1512.5" y="921" text-anchor="middle">20:40</text><text x="1562.5" y="921" text-anchor="middle">20:42</text><text x="1611.5" y="921" text-anchor="middle">20:44</text><text x="1661.5" y="921" text-anchor="middle">20:46</text><text x="1711.5" y="921" text-anchor="middle">20:48</text><text x="1761.5" y="921" text-anchor="middle">20:50</text><text x="1810.5" y="921" text-anchor="middle">20:52</text><text x="1860.5" y="921" text-anchor="middle">20:54</text></g>
</svg>
<div style="position:absolute;left:74px;top:112px;width:448px;text-align:center;"><svg width="448" height="268" style="position:absolute;left:0;top:0"><path d="M231.4 119.8 L231.4 174 L221.6 174 L221.6 131.1 L208 135.6 L208 127.7 L229.6 119.8 Z" fill="#d8d9da"/></svg></div><div style="position:absolute;left:993px;top:779px;width:448px;text-align:center;font-size:13px;line-height:16px;color:#d8d9da">No data</div><div style="position:absolute;left:1453px;top:779px;width:447px;text-align:center;font-size:13px;line-height:16px;color:#d8d9da">No data</div><div style="position:absolute;left:1910px;top:53px;width:2px;height:659px;background:#3b3d47"></div>
</body></html>
